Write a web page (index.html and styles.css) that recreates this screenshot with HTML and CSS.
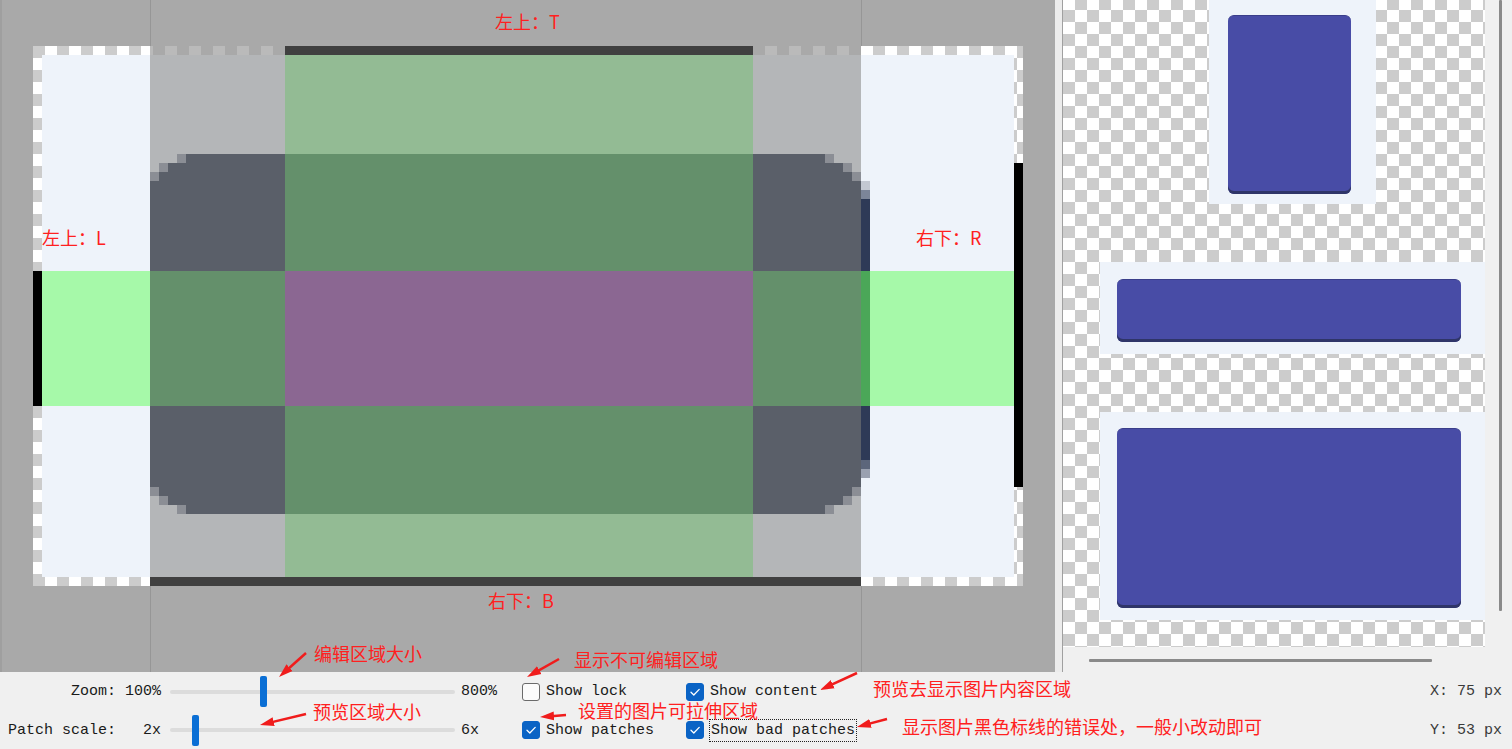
FILE: index.html
```html
<!DOCTYPE html>
<html lang="zh-CN">
<head>
<meta charset="utf-8">
<title>Draw 9-patch</title>
<link rel="stylesheet" href="styles.css">
</head>
<body>
<div class="app">
  <div class="main">
    <div class="editor">
      <svg class="canvas" width="1055" height="672" viewBox="0 0 1055 672" shape-rendering="crispEdges">
        <defs>
          <pattern id="chk" x="33" y="46" width="24" height="24" patternUnits="userSpaceOnUse">
            <rect width="24" height="24" fill="#ffffff"/>
            <rect width="12" height="12" fill="#cccccc"/>
            <rect x="12" y="12" width="12" height="12" fill="#cccccc"/>
          </pattern>
        </defs>
        <rect width="1055" height="672" fill="#a9a9a9"/>
        <rect x="0" y="0" width="2" height="672" fill="#9f9f9f"/>
        <rect x="150" y="0" width="1" height="46" fill="#969696"/>
        <rect x="861" y="0" width="1" height="46" fill="#969696"/>
        <rect x="150" y="586" width="1" height="86" fill="#969696"/>
        <rect x="861" y="586" width="1" height="86" fill="#969696"/>
        <rect x="33" y="46" width="990" height="540" fill="url(#chk)"/>
        <rect x="42" y="55" width="972" height="522" fill="#eef3fa"/>
        <rect x="150" y="46" width="711" height="540" fill="#989898" fill-opacity="0.667"/>
        <path d="M186,154 H825 V163 H843 V172 H852 V181 H861 V487 H852 V496 H843 V505 H825 V514 H186 V505 H168 V496 H159 V487 H150 V181 H159 V172 H168 V163 H186 Z" fill="#5a5f69"/>
        <g fill="#8b8e95">
          <rect x="177" y="154" width="9" height="9"/>
          <rect x="159" y="163" width="9" height="9"/>
          <rect x="150" y="172" width="9" height="9"/>
          <rect x="825" y="154" width="9" height="9"/>
          <rect x="843" y="163" width="9" height="9"/>
          <rect x="852" y="172" width="9" height="9"/>
          <rect x="177" y="505" width="9" height="9"/>
          <rect x="159" y="496" width="9" height="9"/>
          <rect x="150" y="487" width="9" height="9"/>
          <rect x="825" y="505" width="9" height="9"/>
          <rect x="843" y="496" width="9" height="9"/>
          <rect x="852" y="487" width="9" height="9"/>
        </g>
        <rect x="861" y="181" width="9" height="9" fill="#c3c8d2"/>
        <rect x="861" y="190" width="9" height="9" fill="#7c8599"/>
        <rect x="861" y="199" width="9" height="72" fill="#2e3a57"/>
        <rect x="861" y="406" width="9" height="54" fill="#2e3a57"/>
        <rect x="861" y="460" width="9" height="9" fill="#5c667b"/>
        <rect x="861" y="469" width="9" height="9" fill="#9aa1b0"/>
        <rect x="285" y="55" width="468" height="99" fill="#93bb94"/>
        <rect x="285" y="154" width="468" height="117" fill="#64906b"/>
        <rect x="285" y="271" width="468" height="135" fill="#8b6792"/>
        <rect x="285" y="406" width="468" height="108" fill="#64906b"/>
        <rect x="285" y="514" width="468" height="63" fill="#93bb94"/>
        <rect x="42" y="271" width="108" height="135" fill="#a6f9a9"/>
        <rect x="150" y="271" width="135" height="135" fill="#64906b"/>
        <rect x="753" y="271" width="108" height="135" fill="#64906b"/>
        <rect x="861" y="271" width="9" height="135" fill="#4ba758"/>
        <rect x="870" y="271" width="144" height="135" fill="#a6f9a9"/>
        <rect x="285" y="46" width="468" height="9" fill="#404040"/>
        <rect x="150" y="577" width="711" height="9" fill="#404040"/>
        <rect x="33" y="271" width="9" height="135" fill="#000000"/>
        <rect x="1014" y="163" width="9" height="324" fill="#000000"/>
      </svg>
    </div>
    <div class="splitter"></div>
    <div class="preview">
      <div class="viewport">
        <div class="content">
          <div class="np np-tall"><div class="btn"></div></div>
          <div class="np np-wide"><div class="btn"></div></div>
          <div class="np np-big"><div class="btn"></div></div>
        </div>
      </div>
      <div class="vtrack"><div class="vthumb"></div></div>
      <div class="htrack"><div class="hthumb"></div></div>
      <div class="corner"></div>
    </div>
  </div>

  <div class="controls">
    <div class="grid">
      <span class="lbl">Zoom:</span>
      <span class="val">100%</span>
      <div class="slider"><div class="track"></div><div class="thumb" style="left:90px"></div></div>
      <span class="max">800%</span>
      <div class="chk"><span class="box"></span><span class="txt">Show lock</span></div>
      <div class="chk"><span class="box on"><svg width="16" height="16" viewBox="0 0 16 16"><path d="M4 8.3 L6.8 11 L12.2 5.4" fill="none" stroke="#ffffff" stroke-width="1.3" stroke-linecap="round" stroke-linejoin="round"/></svg></span><span class="txt">Show content</span></div>

      <span class="lbl">Patch scale:</span>
      <span class="val">2x</span>
      <div class="slider"><div class="track"></div><div class="thumb" style="left:22px"></div></div>
      <span class="max">6x</span>
      <div class="chk"><span class="box on"><svg width="16" height="16" viewBox="0 0 16 16"><path d="M4 8.3 L6.8 11 L12.2 5.4" fill="none" stroke="#ffffff" stroke-width="1.3" stroke-linecap="round" stroke-linejoin="round"/></svg></span><span class="txt">Show patches</span></div>
      <div class="chk"><span class="box on"><svg width="16" height="16" viewBox="0 0 16 16"><path d="M4 8.3 L6.8 11 L12.2 5.4" fill="none" stroke="#ffffff" stroke-width="1.3" stroke-linecap="round" stroke-linejoin="round"/></svg></span><span class="txt focus">Show bad patches</span></div>
    </div>
    <div class="coords">
      <span>X: 75 px</span>
      <span>Y: 53 px</span>
    </div>
  </div>

  <span class="note n-t">左上：T</span>
  <span class="note n-l">左上：L</span>
  <span class="note n-r">右下：R</span>
  <span class="note n-b">右下：B</span>
  <span class="note n-zoom">编辑区域大小</span>
  <span class="note n-scale">预览区域大小</span>
  <span class="note n-lock">显示不可编辑区域</span>
  <span class="note n-content">预览去显示图片内容区域</span>
  <span class="note n-patches">设置的图片可拉伸区域</span>
  <span class="note n-bad">显示图片黑色标线的错误处，一般小改动即可</span>

  <svg class="arrows" width="1512" height="749" viewBox="0 0 1512 749">
    <defs>
      <marker id="ah" viewBox="0 0 14 10" refX="6" refY="5" markerWidth="14" markerHeight="10" markerUnits="userSpaceOnUse" orient="auto">
        <path d="M0,0.5 L14,5 L0,9.5 Z" fill="#f01c1c"/>
      </marker>
    </defs>
    <g stroke="#f01c1c" stroke-width="2.5" fill="none" marker-end="url(#ah)">
      <line x1="306" y1="653" x2="285" y2="671.7"/>
      <line x1="306" y1="714" x2="267.8" y2="723.1"/>
      <line x1="559" y1="659" x2="534" y2="673.1"/>
      <line x1="857" y1="673" x2="827.3" y2="686.7"/>
      <line x1="566" y1="715" x2="548" y2="716.4"/>
      <line x1="887" y1="719" x2="864.7" y2="724.9"/>
    </g>
  </svg>
</div>
</body>
</html>
```

FILE: styles.css
```css
* { box-sizing: border-box; }
html, body { margin: 0; padding: 0; }
body {
  width: 1512px;
  height: 749px;
  overflow: hidden;
  background: #f0f0f0;
  font-family: "Liberation Mono", "DejaVu Sans Mono", monospace;
}
.app {
  position: relative;
  width: 1512px;
  height: 749px;
  background: #f0f0f0;
  overflow: hidden;
}
.main {
  display: flex;
  height: 672px;
}
.editor {
  position: relative;
  width: 1055px;
  height: 672px;
  background: #a9a9a9;
  flex: none;
}
.canvas { display: block; }
.splitter {
  width: 8px;
  flex: none;
  background: #ececec;
  border-right: 1px solid #a0a0a0;
}
.preview {
  flex: 1;
  display: grid;
  grid-template-columns: 422px 27px;
  grid-template-rows: 647px 25px;
  background: #f0f0f0;
}
.viewport {
  overflow: hidden;
  background: repeating-conic-gradient(#cccccc 0 25%, #ffffff 0 50%) 0 -2px / 24px 24px;
}
.content {
  width: 458px;
  display: flex;
  flex-direction: column;
  align-items: center;
  gap: 58px;
}
.np { background: #eef3fa; flex: none; }
.np-tall { width: 167px; height: 204px; padding: 15px 25px 10px 19px; }
.np-wide { width: 385px; height: 92px; padding: 17px 24px 12px 17px; }
.np-big { width: 385px; height: 208px; padding: 16px 24px 12px 17px; }
.btn {
  width: 100%;
  height: 100%;
  background: #484ca6;
  border-radius: 6px;
  border-top: 1px solid #3a3e8a;
  box-shadow: inset 0 -3px 0 #2f3568;
}
.vtrack { padding-left: 14px; }
.vthumb {
  width: 3px;
  height: 611px;
  background: #8a8a8a;
  border-radius: 1px;
}
.htrack { padding-top: 12px; padding-left: 26px; }
.hthumb {
  width: 343px;
  height: 3px;
  background: #8a8a8a;
  border-radius: 1px;
}

.controls {
  display: flex;
  height: 77px;
  font-size: 15px;
  line-height: 15px;
  color: #1a1a1a;
}
.grid {
  display: grid;
  grid-template-columns: 116px 45px 300px 61px 164px 200px;
  grid-template-rows: 39px 38px;
  align-items: center;
}
.lbl, .val { text-align: right; white-space: pre; }
.max { white-space: pre; }
.slider {
  position: relative;
  margin-left: 9px;
  width: 285px;
  height: 31px;
  display: flex;
  align-items: center;
}
.track {
  width: 100%;
  height: 4px;
  background: #dcdcdc;
  border-radius: 2px;
}
.thumb {
  position: absolute;
  top: 0;
  width: 7px;
  height: 31px;
  background: #0b6fd5;
  border-radius: 2px;
}
.chk {
  display: flex;
  align-items: center;
  gap: 6px;
  white-space: pre;
}
.box {
  width: 18px;
  height: 18px;
  flex: none;
  border-radius: 3px;
  border: 1px solid #6a6a6a;
  background: #fbfbfb;
  display: flex;
}
.box.on {
  background: #0a63c5;
  border-color: #0a63c5;
}
.focus {
  border: 1px dotted #222222;
  padding: 3px 1px;
  margin-left: -1px;
}
.coords {
  margin-left: auto;
  padding-right: 10px;
  display: grid;
  grid-template-rows: 39px 38px;
  align-items: center;
  white-space: pre;
  color: #3a3a3a;
}

.note {
  position: absolute;
  font-family: "Noto Sans CJK SC", "Noto Sans", sans-serif;
  font-size: 18px;
  line-height: 18px;
  color: #ff2020;
  white-space: nowrap;
}
.n-t { left: 495px; top: 12px; }
.n-l { left: 42px; top: 228px; }
.n-r { left: 916px; top: 228px; }
.n-b { left: 488px; top: 591px; }
.n-zoom { left: 314px; top: 644px; }
.n-scale { left: 313px; top: 702px; }
.n-lock { left: 574px; top: 650px; }
.n-content { left: 873px; top: 679px; }
.n-patches { left: 578px; top: 701px; }
.n-bad { left: 902px; top: 717px; }

.arrows {
  position: absolute;
  left: 0;
  top: 0;
  pointer-events: none;
}
```
